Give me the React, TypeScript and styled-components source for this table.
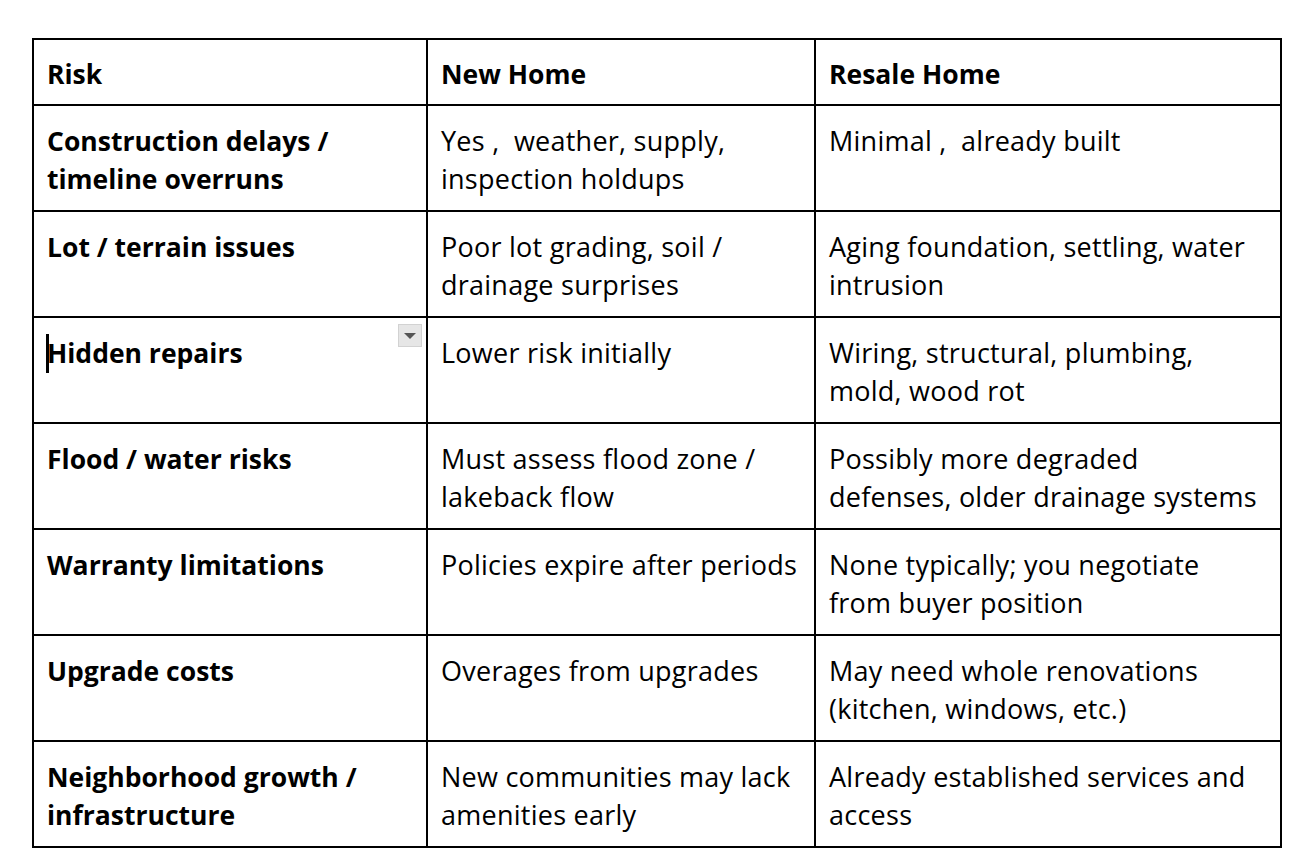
import React from "react";
import styled, { createGlobalStyle } from "styled-components";

const GlobalStyle = createGlobalStyle`
  html, body {
    margin: 0;
    padding: 0;
    background: #fff;
  }
  body {
    font-family: "Open Sans", "Liberation Sans", sans-serif;
    color: #000;
  }
`;

const Page = styled.div`
  padding: 38px 0 0 32px;
`;

const Table = styled.table`
  width: 1248px;
  border-collapse: collapse;
  table-layout: fixed;
  font-size: 27px;
  line-height: 38px;
  letter-spacing: 0.25px;
`;

const HeadCell = styled.th`
  border: 2px solid #000;
  padding: 15px 13px 11px;
  text-align: left;
  font-weight: 700;
  font-size: 26.5px;
  letter-spacing: 0;
  vertical-align: top;
  white-space: pre;
`;

const Cell = styled.td<{ $bold?: boolean }>`
  position: relative;
  border: 2px solid #000;
  padding: 16px 13px 12px;
  text-align: left;
  vertical-align: top;
  white-space: pre;
  font-weight: ${(p) => (p.$bold ? 700 : 400)};
  font-size: ${(p) => (p.$bold ? "26.5px" : "27px")};
  letter-spacing: ${(p) => (p.$bold ? "0" : "0.25px")};
`;

const Caret = styled.span`
  display: inline-block;
  width: 3px;
  height: 39px;
  margin-right: -2px;
  margin-left: -1px;
  vertical-align: top;
  background: #000;
`;

const MenuButton = styled.span`
  position: absolute;
  top: 6px;
  right: 4px;
  width: 24px;
  height: 23px;
  box-sizing: border-box;
  background: #e6e6e6;
  border: 1px solid #d2d2d2;
  display: flex;
  align-items: center;
  justify-content: center;

  &::after {
    content: "";
    border-left: 6px solid transparent;
    border-right: 6px solid transparent;
    border-top: 6px solid #555;
  }
`;

type Row = {
  risk: string[];
  newHome: string[];
  resale: string[];
  active?: boolean;
};

const rows: Row[] = [
  {
    risk: ["Construction delays /", "timeline overruns"],
    newHome: ["Yes ,  weather, supply,", "inspection holdups"],
    resale: ["Minimal ,  already built"],
  },
  {
    risk: ["Lot / terrain issues"],
    newHome: ["Poor lot grading, soil /", "drainage surprises"],
    resale: ["Aging foundation, settling, water", "intrusion"],
  },
  {
    risk: ["Hidden repairs"],
    newHome: ["Lower risk initially"],
    resale: ["Wiring, structural, plumbing,", "mold, wood rot"],
    active: true,
  },
  {
    risk: ["Flood / water risks"],
    newHome: ["Must assess flood zone /", "lakeback flow"],
    resale: ["Possibly more degraded", "defenses, older drainage systems"],
  },
  {
    risk: ["Warranty limitations"],
    newHome: ["Policies expire after periods"],
    resale: ["None typically; you negotiate", "from buyer position"],
  },
  {
    risk: ["Upgrade costs"],
    newHome: ["Overages from upgrades"],
    resale: ["May need whole renovations", "(kitchen, windows, etc.)"],
  },
  {
    risk: ["Neighborhood growth /", "infrastructure"],
    newHome: ["New communities may lack", "amenities early"],
    resale: ["Already established services and", "access"],
  },
];

const Lines: React.FC<{ lines: string[] }> = ({ lines }) => (
  <>
    {lines.map((l, i) => (
      <React.Fragment key={i}>
        {i > 0 && <br />}
        {l}
      </React.Fragment>
    ))}
  </>
);

const App: React.FC = () => {
  return (
    <Page>
      <GlobalStyle />
      <Table>
        <colgroup>
          <col style={{ width: 394 }} />
          <col style={{ width: 388 }} />
          <col style={{ width: 466 }} />
        </colgroup>
        <thead>
          <tr>
            <HeadCell>Risk</HeadCell>
            <HeadCell>New Home</HeadCell>
            <HeadCell>Resale Home</HeadCell>
          </tr>
        </thead>
        <tbody>
          {rows.map((r) => (
            <tr key={r.risk[0]}>
              <Cell $bold>
                {r.active && <Caret />}
                <Lines lines={r.risk} />
                {r.active && <MenuButton />}
              </Cell>
              <Cell>
                <Lines lines={r.newHome} />
              </Cell>
              <Cell>
                <Lines lines={r.resale} />
              </Cell>
            </tr>
          ))}
        </tbody>
      </Table>
    </Page>
  );
};

export default App;
